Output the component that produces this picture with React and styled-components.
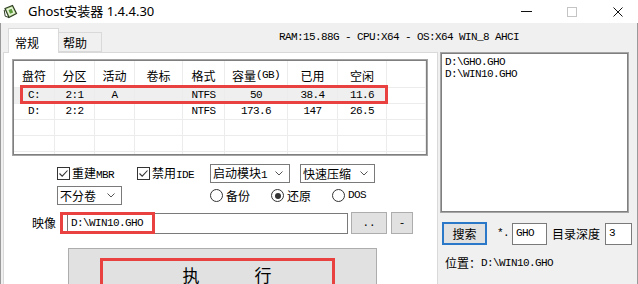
import React from 'react';
import styled, { createGlobalStyle } from 'styled-components';

const CJK = `"Noto Sans CJK SC", "Noto Sans", sans-serif`;
const MONO = `"Liberation Mono", "DejaVu Sans Mono", monospace`;
const RED = '#e8413f';

const GlobalStyle = createGlobalStyle`
  html, body { margin: 0; padding: 0; background: #f0f0f0; }
  body { font-family: ${CJK}; font-size: 12px; color: #000; }
  * { box-sizing: border-box; }
`;

const Window = styled.div`
  width: 638px;
  height: 284px;
  overflow: hidden;
  background: #f0f0f0;
  display: flex;
  flex-direction: column;
`;

const TitleBar = styled.div`
  height: 23px;
  flex-shrink: 0;
  background: #fff;
  display: flex;
  align-items: center;
`;

const AppIcon = styled.svg`
  margin-left: 3px;
  width: 15px;
  height: 15px;
  flex-shrink: 0;
`;

const Title = styled.div`
  margin-left: 10px;
  font-family: "Noto Sans", "Noto Sans CJK SC", sans-serif;
  font-size: 13px;
  line-height: 1;
  color: #000;
`;

const WinControls = styled.div`
  margin-left: auto;
  margin-right: -3px;
  height: 100%;
  display: flex;
`;

const WinButton = styled.div`
  width: 46px;
  height: 100%;
  display: flex;
  align-items: center;
  justify-content: center;
`;

const MinGlyph = styled.div`
  width: 11px;
  height: 1px;
  background: #111;
`;

const MaxGlyph = styled.div`
  width: 10px;
  height: 10px;
  border: 1px solid #c4c4c4;
`;

const Body = styled.div`
  flex: 1;
  min-height: 0;
  display: flex;
  flex-direction: column;
  border-left: 1px solid #9a9a9a;
  border-right: 1px solid #9a9a9a;
`;

const TopRow = styled.div`
  height: 29px;
  flex-shrink: 0;
  display: flex;
  align-items: flex-end;
  padding-left: 7px;
`;

const Tab = styled.div`
  position: relative;
  z-index: ${p => (p.$active ? 2 : 1)};
  height: ${p => (p.$active ? 25 : 20)}px;
  width: ${p => (p.$active ? 51 : 44)}px;
  margin-bottom: ${p => (p.$active ? -1 : 0)}px;
  margin-left: ${p => (p.$active ? 0 : -1)}px;
  padding-left: ${p => (p.$active ? 6 : 4)}px;
  padding-top: ${p => (p.$active ? 3 : 2)}px;
  background: ${p => (p.$active ? '#fff' : '#f0f0f0')};
  border: 1px solid #d9d9d9;
  border-bottom: ${p => (p.$active ? 'none' : '1px solid #d9d9d9')};
  display: flex;
  align-items: center;
  font-size: 12px;
  line-height: 1;
`;

const StatusText = styled.div`
  align-self: flex-start;
  margin-top: 9px;
  margin-left: 177px;
  font-family: ${MONO};
  font-size: 11px;
  letter-spacing: -0.6px;
  line-height: 11px;
  white-space: pre;
  color: #000;
`;

const MainRow = styled.div`
  flex: 1;
  min-height: 0;
  display: flex;
`;

const Panel = styled.div`
  position: relative;
  z-index: 1;
  margin-left: 2px;
  width: 435px;
  flex-shrink: 0;
  background: #fff;
  border: 1px solid #d9d9d9;
  border-bottom: none;
  padding: 6px 0 0 8px;
  display: flex;
  flex-direction: column;
  align-items: flex-start;
`;

const TableFrame = styled.div`
  position: relative;
  width: 416px;
  height: 97px;
  flex-shrink: 0;
  border: 1px solid #a5a5a5;
  box-shadow: inset 0 0 0 1px #7f7f7f;
  padding: 1px;
  background: #fff;
  overflow: hidden;
`;

const TableGrid = styled.div`
  display: grid;
  grid-template-columns: 41px 40px 40px 48px 42px 63px 50px 49px 1fr;
  grid-template-rows: 27px;
  grid-auto-rows: 16px;
  height: 100%;
  overflow: hidden;
`;

const HeadCell = styled.div`
  display: flex;
  align-items: center;
  justify-content: center;
  padding-top: 3px;
  border-right: 1px solid #ececec;
  border-bottom: 1px solid #ececec;
  font-size: 12px;
  line-height: 1;
  white-space: nowrap;
`;

const Cell = styled.div`
  display: flex;
  align-items: center;
  justify-content: center;
  border-right: 1px solid #ececec;
  border-bottom: 1px solid #ececec;
  background: ${p => (p.$sel ? '#efefef' : '#fff')};
  font-family: ${MONO};
  font-size: 11px;
  letter-spacing: -0.6px;
  line-height: 1;
  white-space: pre;
`;

const Mono = styled.span`
  font-family: ${MONO};
  font-size: 11px;
  letter-spacing: -0.6px;
`;

const RedMark = styled.div`
  position: absolute;
  pointer-events: none;
  border: 3px solid ${RED};
  z-index: 3;
`;

const OptionsGrid = styled.div`
  margin-top: 8px;
  margin-left: 45px;
  display: grid;
  grid-template-columns: 80px 73px 90px auto;
  grid-template-rows: 19px 19px;
  row-gap: 3px;
  align-items: center;
`;

const CheckLabel = styled.label`
  display: flex;
  align-items: center;
  gap: 2px;
  font-size: 12px;
  line-height: 1;
  white-space: nowrap;
`;

const CheckBox = styled.span`
  width: 13px;
  height: 13px;
  border: 1px solid #333;
  background: #fff;
  display: flex;
  align-items: center;
  justify-content: center;
  flex-shrink: 0;
`;

const Select = styled.div`
  width: ${p => p.$w}px;
  height: 19px;
  border: 1px solid #7a7a7a;
  background: #fff;
  display: flex;
  align-items: center;
  padding: 0 6px 0 2px;
  font-size: 12px;
  line-height: 1;
  white-space: nowrap;
`;

const SelectText = styled.span`
  flex: 1;
`;

const RadioGroup = styled.div`
  grid-column: 3 / span 2;
  display: flex;
  gap: 21px;
  align-items: center;
`;

const RadioLabel = styled.label`
  display: flex;
  align-items: center;
  gap: 3px;
  font-size: 12px;
  line-height: 1;
  white-space: nowrap;
`;

const RadioCircle = styled.span`
  width: 13px;
  height: 13px;
  border-radius: 50%;
  border: 1px solid #333;
  background: #fff;
  display: flex;
  align-items: center;
  justify-content: center;
  &::after {
    content: '';
    width: 6px;
    height: 6px;
    border-radius: 50%;
    background: ${p => (p.$on ? '#333' : 'transparent')};
  }
`;

const ImageRow = styled.div`
  margin-top: 7px;
  margin-left: 20px;
  height: 22px;
  display: flex;
  align-items: center;
`;

const FieldLabel = styled.span`
  font-size: 12px;
  line-height: 1;
  width: 24px;
  margin-right: 11px;
  white-space: nowrap;
`;

const InputWrap = styled.div`
  position: relative;
  display: flex;
`;

const TextBox = styled.div`
  width: ${p => p.$w}px;
  height: ${p => p.$h || 21}px;
  border: 1px solid #7a7a7a;
  background: #fff;
  display: flex;
  align-items: center;
  padding-left: ${p => p.$pl ?? 3}px;
  font-family: ${MONO};
  font-size: 11px;
  letter-spacing: -0.6px;
  line-height: 1;
  white-space: pre;
`;

const SmallButton = styled.div`
  width: ${p => p.$w}px;
  height: 22px;
  margin-left: ${p => p.$ml}px;
  background: #e1e1e1;
  border: 1px solid #adadad;
  display: flex;
  align-items: center;
  justify-content: center;
  font-family: ${MONO};
  font-size: 11px;
  line-height: 1;
`;

const ExecButton = styled.div`
  position: relative;
  margin-top: 14px;
  margin-left: 56px;
  width: 309px;
  height: 52px;
  flex-shrink: 0;
  background: #e1e1e1;
  border: 1px solid #adadad;
  display: flex;
  align-items: center;
  justify-content: center;
  gap: 55px;
  padding-left: 9px;
  font-size: 17px;
  line-height: 1;
`;

const RightPanel = styled.div`
  flex: 1;
  padding-left: 2px;
  display: flex;
  flex-direction: column;
  align-items: flex-start;
`;

const ListBox = styled.div`
  width: 189px;
  height: 161px;
  flex-shrink: 0;
  background: #fff;
  border: 1px solid #a5a5a5;
  box-shadow: inset 0 0 0 1px #7f7f7f;
  padding: 3px 4px;
  display: flex;
  flex-direction: column;
`;

const ListItem = styled.div`
  height: 12px;
  display: flex;
  align-items: center;
  font-family: ${MONO};
  font-size: 11px;
  letter-spacing: -0.6px;
  line-height: 1;
  white-space: pre;
`;

const SearchRow = styled.div`
  margin-top: 9px;
  margin-left: 2px;
  display: flex;
  align-items: center;
  height: 23px;
`;

const FocusButton = styled.div`
  width: 45px;
  height: 23px;
  background: #e1e1e1;
  border: 2px solid #2c78c8;
  display: flex;
  align-items: center;
  justify-content: center;
  font-size: 12px;
  line-height: 1;
`;

const PlainText = styled.span`
  margin-left: ${p => p.$ml || 0}px;
  margin-right: ${p => p.$mr || 0}px;
  font-family: ${p => (p.$mono ? MONO : CJK)};
  font-size: ${p => (p.$mono ? 11 : 12)}px;
  letter-spacing: ${p => (p.$mono ? -0.6 : 0)}px;
  line-height: 1;
  white-space: pre;
`;

const Location = styled.div`
  margin-top: 12px;
  margin-left: 5px;
  font-size: 12px;
  line-height: 1;
  white-space: pre;
  display: flex;
  align-items: center;
`;

const Chevron = () => (
  <svg width="8" height="5" viewBox="0 0 8 5">
    <polyline points="0.5,0.5 4,4 7.5,0.5" fill="none" stroke="#555" strokeWidth="1" />
  </svg>
);

const Check = () => (
  <svg width="11" height="11" viewBox="0 0 11 11">
    <polyline points="1.5,5.5 4.2,8.2 9.5,2.5" fill="none" stroke="#333" strokeWidth="1.1" />
  </svg>
);

const rows = [
  ['C:', '2:1', 'A', '', 'NTFS', '50', '38.4', '11.6', ''],
  ['D:', '2:2', '', '', 'NTFS', '173.6', '147', '26.5', ''],
  ['', '', '', '', '', '', '', '', ''],
  ['', '', '', '', '', '', '', '', ''],
  ['', '', '', '', '', '', '', '', ''],
];

const headers = [
  '盘符',
  '分区',
  '活动',
  '卷标',
  '格式',
  <>容量<Mono>(GB)</Mono></>,
  '已用',
  '空闲',
  '',
];

export default function App() {
  return (
    <>
      <GlobalStyle />
      <Window>
        <TitleBar>
          <AppIcon viewBox="0 0 15 15">
            <path d="M2 4.5 L9.5 1.5 L13.5 9.5 L6 13.5 Z" fill="#b7dc8f" stroke="#2f3d25" strokeWidth="1.2" />
            <path d="M3.5 5.2 L9 3 L12 9 L6.5 11.8 Z" fill="#e9f5dc" />
            <path d="M5.5 6 L8.6 4.8 L10.2 8.4 L7 9.8 Z" fill="#5d9c3a" />
            <path d="M1.2 6 L2.2 12.2 L6 13.5" fill="none" stroke="#2f3d25" strokeWidth="1" />
          </AppIcon>
          <Title>Ghost安装器 1.4.4.30</Title>
          <WinControls>
            <WinButton><MinGlyph /></WinButton>
            <WinButton><MaxGlyph /></WinButton>
            <WinButton>
              <svg width="10" height="10" viewBox="0 0 10 10">
                <path d="M0.5 0.5 L9.5 9.5 M9.5 0.5 L0.5 9.5" stroke="#111" strokeWidth="1" />
              </svg>
            </WinButton>
          </WinControls>
        </TitleBar>
        <Body>
          <TopRow>
            <Tab $active>常规</Tab>
            <Tab>帮助</Tab>
            <StatusText>RAM:15.88G - CPU:X64 - OS:X64 WIN_8 AHCI</StatusText>
          </TopRow>
          <MainRow>
            <Panel>
              <TableFrame>
                <TableGrid>
                  {headers.map((h, i) => (
                    <HeadCell key={'h' + i}>{h}</HeadCell>
                  ))}
                  {rows.map((r, ri) =>
                    r.map((c, ci) => (
                      <Cell key={ri + '-' + ci} $sel={ri === 0 && ci < 8}>{c}</Cell>
                    ))
                  )}
                </TableGrid>
                <RedMark style={{ left: 7, top: 25, width: 368, height: 19 }} />
              </TableFrame>

              <OptionsGrid>
                <CheckLabel>
                  <CheckBox><Check /></CheckBox>
                  <span>重建<Mono>MBR</Mono></span>
                </CheckLabel>
                <CheckLabel>
                  <CheckBox><Check /></CheckBox>
                  <span>禁用<Mono>IDE</Mono></span>
                </CheckLabel>
                <Select $w={80}>
                  <SelectText>启动模块<Mono>1</Mono></SelectText>
                  <Chevron />
                </Select>
                <Select $w={75}>
                  <SelectText>快速压缩</SelectText>
                  <Chevron />
                </Select>

                <Select $w={65}>
                  <SelectText>不分卷</SelectText>
                  <Chevron />
                </Select>
                <span />
                <RadioGroup>
                  <RadioLabel><RadioCircle />备份</RadioLabel>
                  <RadioLabel><RadioCircle $on />还原</RadioLabel>
                  <RadioLabel><RadioCircle /><Mono>DOS</Mono></RadioLabel>
                </RadioGroup>
              </OptionsGrid>

              <ImageRow>
                <FieldLabel>映像</FieldLabel>
                <InputWrap>
                  <TextBox $w={281}>D:\WIN10.GHO</TextBox>
                  <RedMark style={{ left: -7, top: -1, width: 95, height: 22 }} />
                </InputWrap>
                <SmallButton $w={36} $ml={3}>..</SmallButton>
                <SmallButton $w={22} $ml={4}>-</SmallButton>
              </ImageRow>

              <ExecButton>
                <span>执</span>
                <span>行</span>
                <RedMark style={{ left: 31, top: 9, width: 235, height: 50 }} />
              </ExecButton>
            </Panel>

            <RightPanel>
              <ListBox>
                <ListItem>D:\GHO.GHO</ListItem>
                <ListItem>D:\WIN10.GHO</ListItem>
              </ListBox>
              <SearchRow>
                <FocusButton>搜索</FocusButton>
                <PlainText $mono $ml={10} $mr={3}>*.</PlainText>
                <TextBox $w={35} $h={22}>GHO</TextBox>
                <PlainText $ml={5} $mr={5}>目录深度</PlainText>
                <TextBox $w={27} $h={22}>3</TextBox>
              </SearchRow>
              <Location>
                位置：<Mono>D:\WIN10.GHO</Mono>
              </Location>
            </RightPanel>
          </MainRow>
        </Body>
      </Window>
    </>
  );
}
